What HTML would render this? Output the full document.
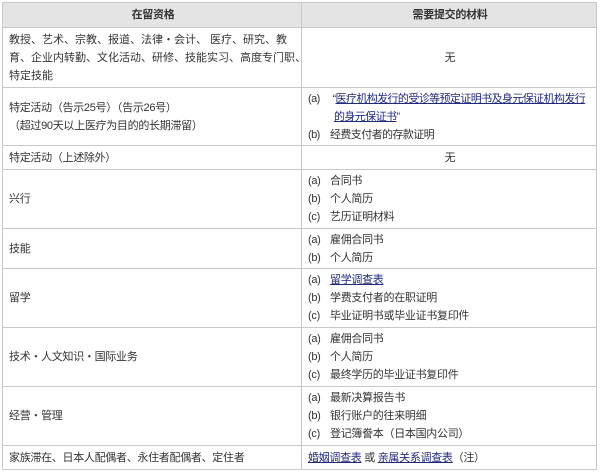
<!DOCTYPE html>
<html><head><meta charset="utf-8"><style>
body{margin:0;background:#fff;width:600px;height:472px;overflow:hidden;font-family:"Liberation Sans","Noto Sans CJK SC",sans-serif;font-size:11px;color:#333;letter-spacing:-0.3px;}
.r{position:absolute;left:2px;width:595px;border:1px solid #c8c8c8;border-top:none;box-sizing:border-box;display:flex;overflow:hidden;}
.c1{width:299px;flex:none;border-right:1px solid #c8c8c8;box-sizing:border-box;padding:0 4px 0 6px;display:flex;flex-direction:column;justify-content:center;line-height:18px;white-space:nowrap;}
.c2{flex:1;padding:0 4px 0 6px;display:flex;flex-direction:column;justify-content:center;line-height:18px;white-space:nowrap;}
.ctr{align-items:center;text-align:center;}
.h{background:#e4e4e4;font-weight:bold;border-top:1px solid #c8c8c8;}
a{color:#1f2a80;text-decoration:underline;}
.ind{padding-left:26px;}
i{font-style:normal;display:inline-block;width:22px;}
</style></head><body>
<div class="r h" style="top:2px;height:26px"><div class="c1 ctr">在留资格</div><div class="c2 ctr">需要提交的材料</div></div>
<div class="r" style="top:28px;height:60px"><div class="c1" style="letter-spacing:0"><div>教授、艺术、宗教、报道、法律・会计、 医疗、研究、教</div><div>育、企业内转勤、文化活动、研修、技能实习、高度专门职、</div><div>特定技能</div></div><div class="c2 ctr">无</div></div>
<div class="r" style="top:88px;height:58px"><div class="c1"><div>特定活动（告示25号）（告示26号）</div><div>（超过90天以上医疗为目的的长期滞留）</div></div><div class="c2" style="letter-spacing:-0.6px"><div><i>(a)</i> “<a>医疗机构发行的受诊等预定证明书及身元保证机构发行</a></div><div class="ind"><a>的身元保证书</a>”</div><div><i>(b)</i>经费支付者的存款证明</div></div></div>
<div class="r" style="top:146px;height:24px"><div class="c1">特定活动（上述除外）</div><div class="c2 ctr">无</div></div>
<div class="r" style="top:170px;height:59px"><div class="c1">兴行</div><div class="c2"><div><i>(a)</i>合同书</div><div><i>(b)</i>个人简历</div><div><i>(c)</i>艺历证明材料</div></div></div>
<div class="r" style="top:229px;height:40px"><div class="c1">技能</div><div class="c2"><div><i>(a)</i>雇佣合同书</div><div><i>(b)</i>个人简历</div></div></div>
<div class="r" style="top:269px;height:59px"><div class="c1">留学</div><div class="c2"><div><i>(a)</i><a>留学调查表</a></div><div><i>(b)</i>学费支付者的在职证明</div><div><i>(c)</i>毕业证明书或毕业证书复印件</div></div></div>
<div class="r" style="top:328px;height:59px"><div class="c1">技术・人文知识・国际业务</div><div class="c2"><div><i>(a)</i>雇佣合同书</div><div><i>(b)</i>个人简历</div><div><i>(c)</i>最终学历的毕业证书复印件</div></div></div>
<div class="r" style="top:387px;height:59px"><div class="c1">经营・管理</div><div class="c2"><div><i>(a)</i>最新决算报告书</div><div><i>(b)</i>银行账户的往来明细</div><div><i>(c)</i>登记簿誊本（日本国内公司）</div></div></div>
<div class="r" style="top:446px;height:24px"><div class="c1">家族滞在、日本人配偶者、永住者配偶者、定住者</div><div class="c2"><div><a>婚姻调查表</a> 或 <a>亲属关系调查表</a>（注）</div></div></div>
</body></html>
